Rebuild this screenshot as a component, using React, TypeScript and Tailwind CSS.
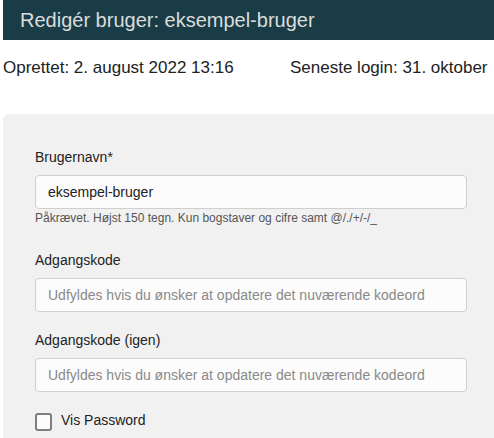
export default function App() {
  return (
    <div className="h-[438px] w-[494px] overflow-hidden bg-white pl-[3px] font-['Liberation_Sans',Arial,sans-serif]">
      <header className="flex h-10 items-center bg-[#193c46] px-[17px]">
        <h1 className="text-[20px] leading-none text-[#dcdcdc]">Redigér bruger: eksempel-bruger</h1>
      </header>

      <div className="flex h-[74px] items-start whitespace-nowrap pt-[18px] text-[17px] leading-5 text-[#222]">
        <span className="w-[287px] shrink-0">Oprettet: 2. august 2022 13:16</span>
        <span>Seneste login: 31. oktober</span>
      </div>

      <section className="rounded-tl-md bg-[#f1f1f1] pl-8 pr-[24px] pt-[33px] pb-4 text-[#222]">
        <div className="mb-[23px]">
          <label className="mb-2 block text-sm leading-5">Brugernavn*</label>
          <input
            className="block h-[34px] w-[432px] rounded border border-[#cfcfcf] bg-[#fcfcfc] px-3 text-sm text-[#222] outline-none"
            defaultValue="eksempel-bruger"
          />
          <p className="text-[12px] leading-[18px] text-[#555]">Påkrævet. Højst 150 tegn. Kun bogstaver og cifre samt @/./+/-/_</p>
        </div>

        <div className="mb-[18px]">
          <label className="mb-2 block text-sm leading-5">Adgangskode</label>
          <input
            className="block h-[34px] w-[432px] rounded border border-[#cfcfcf] bg-[#fcfcfc] px-3 text-sm text-[#222] outline-none placeholder:text-[#8a8a8a]"
            placeholder="Udfyldes hvis du ønsker at opdatere det nuværende kodeord"
            type="password"
          />
        </div>

        <div className="mb-4">
          <label className="mb-2 block text-sm leading-5">Adgangskode (igen)</label>
          <input
            className="block h-[34px] w-[432px] rounded border border-[#cfcfcf] bg-[#fcfcfc] px-3 text-sm text-[#222] outline-none placeholder:text-[#8a8a8a]"
            placeholder="Udfyldes hvis du ønsker at opdatere det nuværende kodeord"
            type="password"
          />
        </div>

        <label className="flex items-center gap-[9px] text-sm leading-6">
          <span className="mt-[3px] block h-[18px] w-[17px] rounded-[3px] border-2 border-[#7a7f84] bg-[#fcfcfc]" />
          Vis Password
        </label>
      </section>
    </div>
  );
}
